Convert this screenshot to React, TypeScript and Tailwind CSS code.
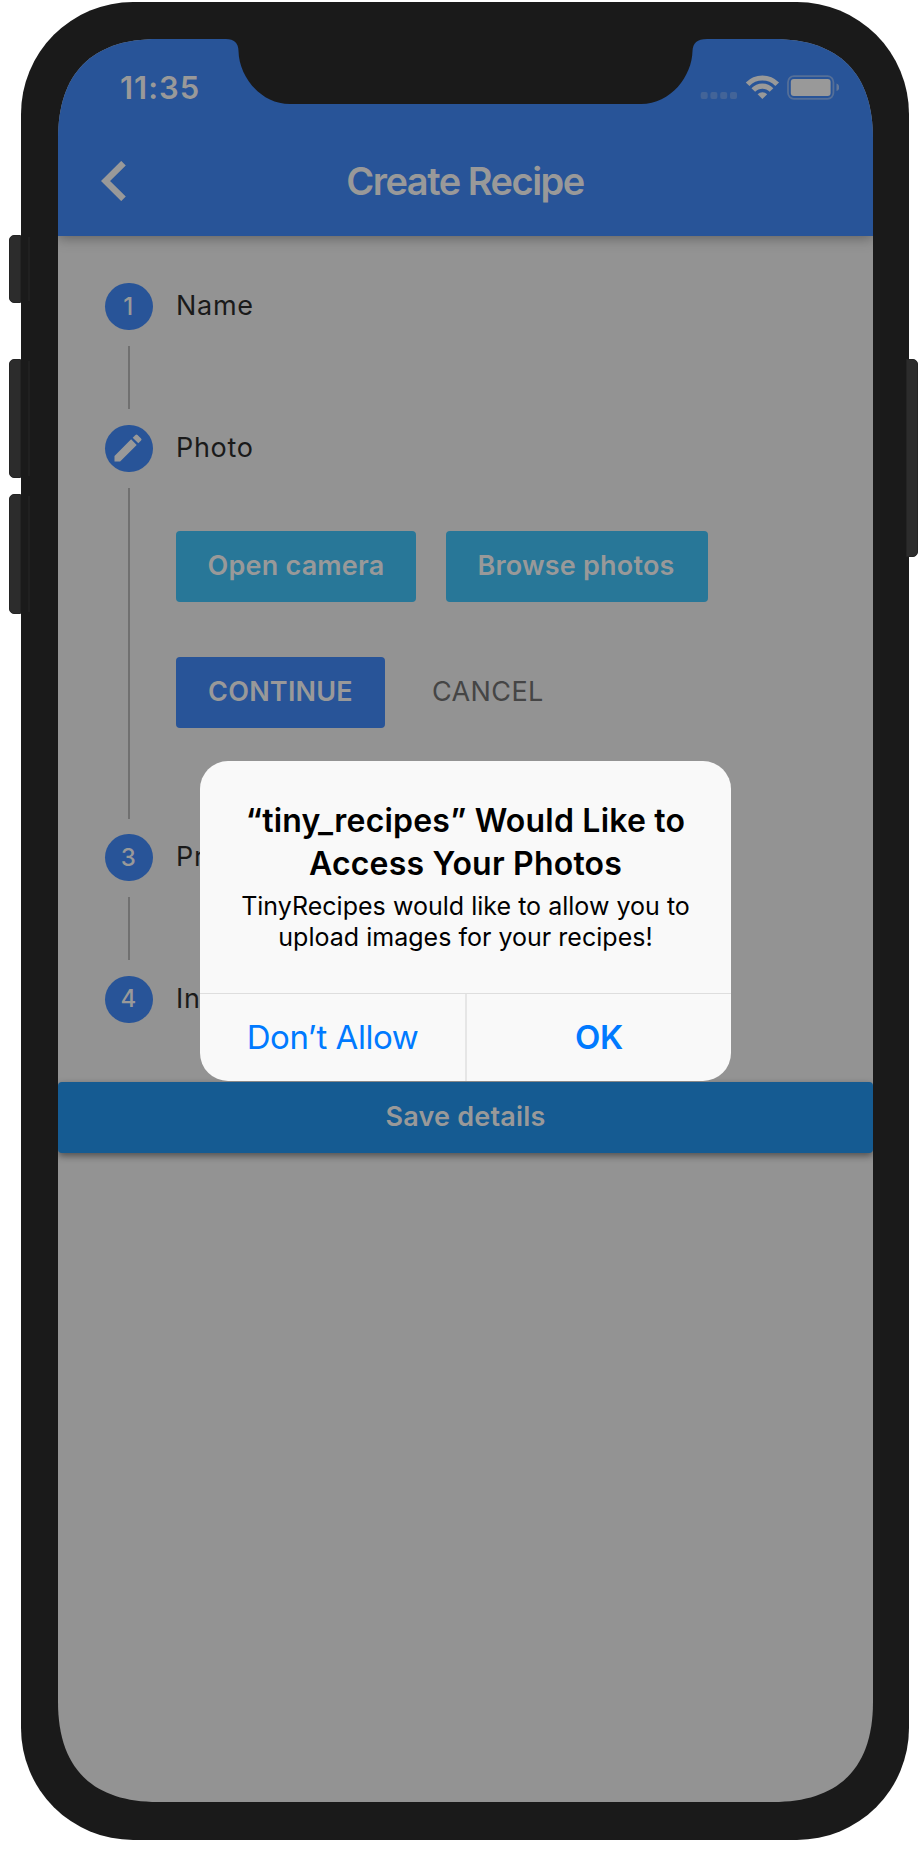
import type { ReactNode } from "react";

function SideButton({ className }: { className: string }) {
  return <div className={`absolute w-[12px] border border-[#242424] bg-[#2c2c2c] ${className}`} />;
}

function StatusBar() {
  return (
    <div className="flex h-[86px] items-start justify-between pl-[62px] pr-[34px]">
      <div className="pt-[30px] text-[31px] font-semibold leading-[38px] tracking-[1px]">11:35</div>
      <svg className="mt-[36px]" width="140" height="25" viewBox="0 0 140 25" fill="#999999">
        <g fillOpacity="0.24">
          <rect x="1.7" y="17" width="7" height="7" rx="2" />
          <rect x="11.4" y="17" width="7" height="7" rx="2" />
          <rect x="21.2" y="17" width="7" height="7" rx="2" />
          <rect x="31" y="17" width="7" height="7" rx="2" />
        </g>
        <g fill="none" stroke="#999999" strokeWidth="5.1">
          <path d="M48.6 9.200a20.600 20.600 0 0 1 29.600 0" />
          <path d="M54.3 15a12.600 12.600 0 0 1 18.200 0" />
        </g>
        <path d="M63.400 24l-4.800-4.800a6.800 6.800 0 0 1 9.600 0z" />
        <rect x="89" y="1.200" width="45.400" height="22.600" rx="6" fill="none" stroke="#999999" strokeOpacity="0.4" strokeWidth="1.800" />
        <rect x="91.800" y="4" width="39.800" height="17" rx="3" />
        <path d="M137.500 8.600q2.800.8 2.800 3.700t-2.800 3.700z" fillOpacity="0.5" />
      </svg>
    </div>
  );
}

function Notch() {
  return (
    <svg className="absolute left-[168px] top-[-1px]" width="482" height="67" viewBox="0 0 482 67" fill="#1a1a1a">
      <path d="M0 0V1C8 1 12.500 5 12.500 13C13 38 34 66 64 66H415C445 66 466 38 466.500 13C467 5 471 1 481 1V0Z" />
    </svg>
  );
}

function Step({ marker, label, children, last }: { marker: ReactNode; label: string; children?: ReactNode; last?: boolean }) {
  return (
    <div className="flex">
      <div className="flex w-[47.5px] shrink-0 flex-col items-center">
        <div className="flex h-[47px] w-[47.5px] shrink-0 items-center justify-center rounded-full bg-[#285498] pr-px text-[24px] font-medium text-[#999999]">{marker}</div>
        {!last && <div className="mb-[15.5px] mt-[16px] w-[2px] flex-1 bg-[#707070]" />}
      </div>
      <div className="ml-[23.5px] flex-1">
        <div className="h-[47px] text-[27px] leading-[46px] tracking-[0.7px] text-[#1a1a1a]">{label}</div>
        {children ?? (!last && <div className="h-[94.5px]" />)}
      </div>
    </div>
  );
}

function Pencil() {
  return (
    <svg width="36" height="36" viewBox="0 0 24 24" fill="#999999">
      <path d="M3 17.250V21h3.750L17.810 9.940l-3.750-3.750L3 17.250zM20.710 7.040a1 1 0 0 0 0-1.410l-2.340-2.340a1 1 0 0 0-1.410 0l-1.830 1.830 3.750 3.750 1.830-1.830z" />
    </svg>
  );
}

function Dialog() {
  return (
    <div className="absolute left-[142px] top-[722px] flex h-[320px] w-[531px] flex-col overflow-hidden rounded-[28px] bg-[#f9f9f9] text-center text-black">
      <div className="flex-1 whitespace-nowrap pt-[38px]">
        <div className="text-[32px] font-semibold leading-[43px] tracking-[0.2px]">
          “tiny_recipes” Would Like to
          <br />
          Access Your Photos
        </div>
        <div className="mt-[6px] text-[25px] leading-[31px] tracking-[0.02px]">
          TinyRecipes would like to allow you to
          <br />
          upload images for your recipes!
        </div>
      </div>
      <div className="flex h-[88px] border-t border-[#dedede] text-[33px] leading-[87px] text-[#007aff]">
        <div className="w-[267px] border-r-2 border-[#e6e6e6] tracking-[-0.45px]">Don’t Allow</div>
        <div className="flex-1 font-semibold tracking-[-0.3px]">OK</div>
      </div>
    </div>
  );
}

export default function App() {
  return (
    <div className="relative h-[1857px] w-[921px] overflow-hidden bg-white font-['Inter',sans-serif]">
      <SideButton className="left-[9px] top-[235px] h-[68px] rounded-l-[5px]" />
      <SideButton className="left-[9px] top-[359px] h-[119px] rounded-l-[5px]" />
      <SideButton className="left-[9px] top-[494px] h-[120px] rounded-l-[5px]" />
      <div className="relative ml-[21px] mt-[2px] h-[1838px] w-[888px] rounded-[112px] bg-[#1a1a1a] pl-[37px] pt-[37px]">
        <div className="relative h-[1763px] w-[815px] bg-[#939393] [clip-path:path('M0_100C0_34_34_0_100_0H715C781_0_815_34_815_100V1663C815_1729_781_1763_715_1763H100C34_1763_0_1729_0_1663Z')]">
          <header className="h-[197px] bg-[#285498] text-[#999999] shadow-[0_2px_12px_rgba(0,0,0,0.35)]">
            <StatusBar />
            <div className="flex h-[111px] items-center pl-[43px]">
              <svg width="25" height="40" viewBox="0 0 25 40" fill="none" stroke="#999999" strokeWidth="6.500">
                <path d="M22.500 2.200L4.500 20l18 17.800" />
              </svg>
              <h1 className="flex-1 pr-[69px] pt-px text-center text-[38px] font-semibold tracking-[-1.5px]">Create Recipe</h1>
            </div>
          </header>
          <main className="pl-[47px] pt-[47px]">
            <Step marker="1" label="Name" />
            <Step marker={<Pencil />} label="Photo">
              <div className="flex h-[362.5px] flex-col pt-[59px]">
                <div className="flex gap-[30px] text-[27px] font-semibold tracking-[0.2px] text-[#999999]">
                  <button className="h-[71px] w-[240px] rounded-[4px] bg-[#287798]">Open camera</button>
                  <button className="h-[71px] w-[262px] rounded-[4px] bg-[#287798] pr-[2px]">Browse photos</button>
                </div>
                <div className="mt-[55px] flex text-[27px]">
                  <button className="h-[71px] w-[209px] rounded-[4px] bg-[#285498] font-semibold tracking-[0.2px] text-[#999999]">CONTINUE</button>
                  <button className="ml-[47px] tracking-[0.4px] text-[#454545]">CANCEL</button>
                </div>
              </div>
            </Step>
            <Step marker="3" label="Pr" />
            <Step marker="4" label="In" last />
          </main>
          <button className="mt-[59.5px] h-[71px] w-full rounded-[4px] bg-[#155b92] text-[27px] font-semibold tracking-[0.2px] text-[#999999] shadow-[0_3px_7px_rgba(0,0,0,0.45)]">
            Save details
          </button>
          <Notch />
          <Dialog />
        </div>
      </div>
      <SideButton className="left-[906px] top-[359px] h-[198px] rounded-r-[5px]" />
      <div className="absolute left-[28px] top-[237px] h-[64px] w-[2px] bg-[#202020]" />
      <div className="absolute left-[28px] top-[361px] h-[115px] w-[2px] bg-[#202020]" />
      <div className="absolute left-[28px] top-[496px] h-[116px] w-[2px] bg-[#202020]" />
    </div>
  );
}
